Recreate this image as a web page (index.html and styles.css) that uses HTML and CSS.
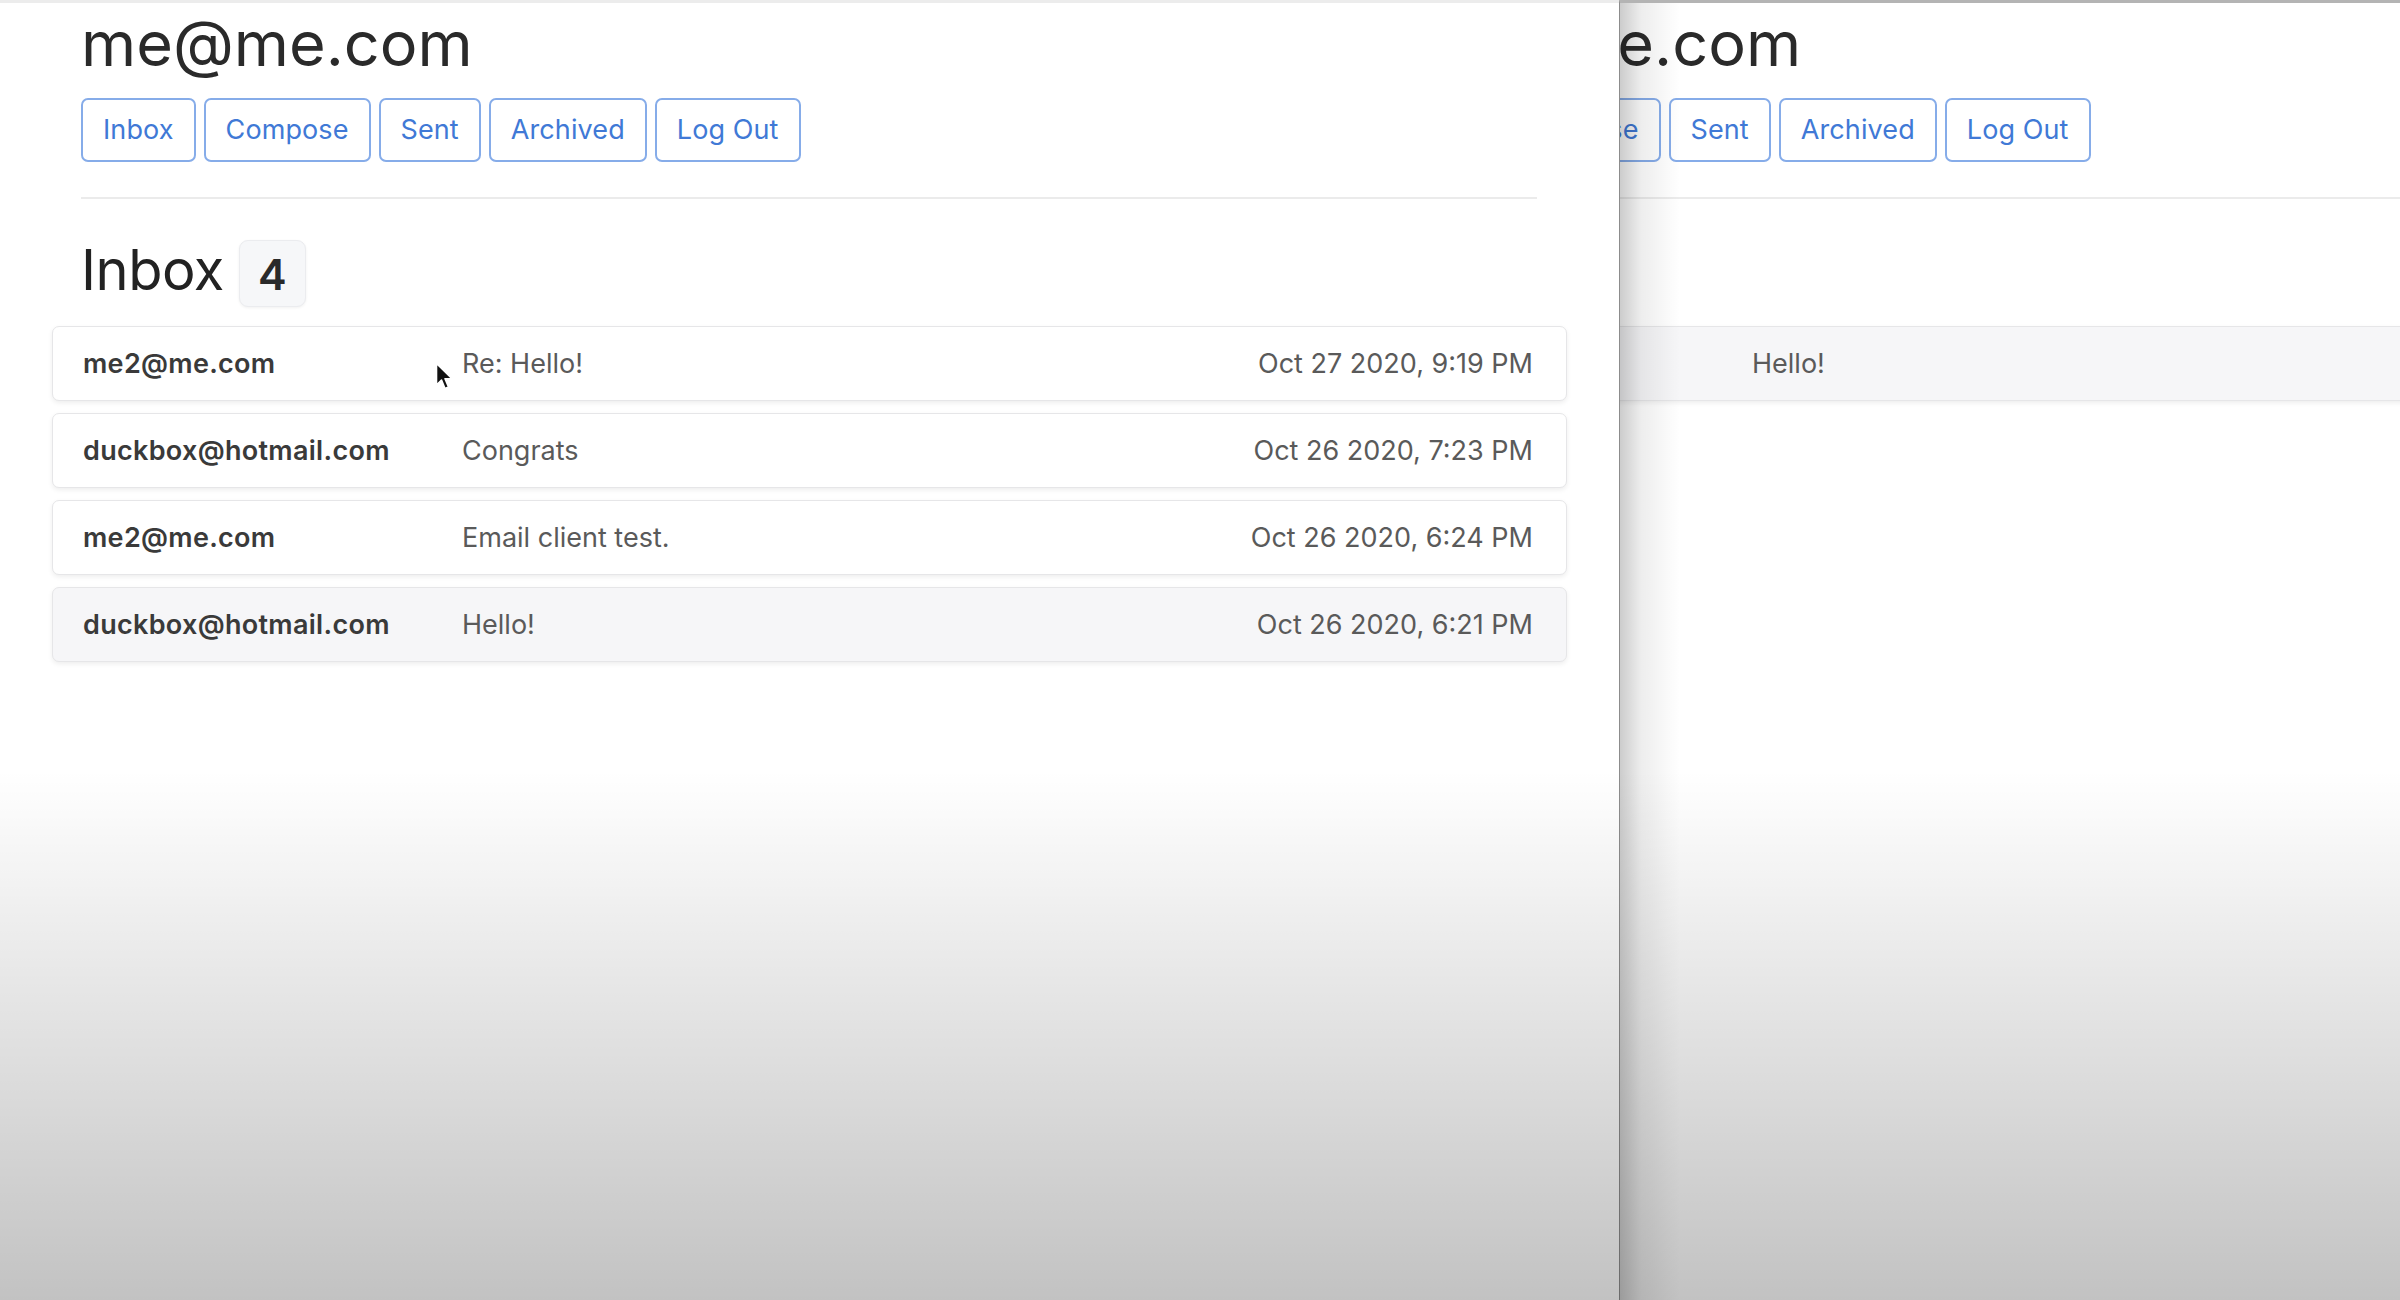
FILE: index.html
```html
<!DOCTYPE html>
<html lang="en">
<head>
<meta charset="utf-8">
<title>Mail</title>
<link rel="stylesheet" href="styles.css">
</head>
<body>
<div class="desktop">
  <div class="window window-left">
    <div class="page">
      <h2 class="user">me@me.com</h2>
      <nav class="nav">
        <button class="btn">Inbox</button>
        <button class="btn">Compose</button>
        <button class="btn">Sent</button>
        <button class="btn">Archived</button>
        <button class="btn">Log Out</button>
      </nav>
      <hr class="rule">
      <div class="mailbox-head">
        <h3 class="mailbox-title">Inbox</h3>
        <span class="badge">4</span>
      </div>
      <div class="emails">
        <div class="email">
          <span class="sender">me2@me.com</span>
          <span class="subject">Re: Hello!</span>
          <span class="date">Oct 27 2020, 9:19 PM</span>
        </div>
        <div class="email">
          <span class="sender">duckbox@hotmail.com</span>
          <span class="subject">Congrats</span>
          <span class="date">Oct 26 2020, 7:23 PM</span>
        </div>
        <div class="email">
          <span class="sender">me2@me.com</span>
          <span class="subject">Email client test.</span>
          <span class="date">Oct 26 2020, 6:24 PM</span>
        </div>
        <div class="email read">
          <span class="sender">duckbox@hotmail.com</span>
          <span class="subject">Hello!</span>
          <span class="date">Oct 26 2020, 6:21 PM</span>
        </div>
      </div>
    </div>
  </div>
  <div class="window window-right">
    <div class="page page-shifted">
      <h2 class="user">me2@me.com</h2>
      <nav class="nav">
        <button class="btn">Inbox</button>
        <button class="btn">Compose</button>
        <button class="btn">Sent</button>
        <button class="btn">Archived</button>
        <button class="btn">Log Out</button>
      </nav>
      <hr class="rule">
      <div class="mailbox-head">
        <h3 class="mailbox-title">Sent</h3>
      </div>
      <div class="emails">
        <div class="email read">
          <span class="sender">me@me.com</span>
          <span class="subject">Hello!</span>
          <span class="date">Oct 26 2020, 6:21 PM</span>
        </div>
      </div>
    </div>
  </div>
  <svg class="cursor" width="20" height="30" viewBox="0 0 20 30" aria-hidden="true">
    <path d="M1.5 1.5 L1.5 23 L6.5 18 L10 26.5 L13.5 25 L10 16.8 L17 16.8 Z" fill="#111" stroke="#fff" stroke-width="1.6" stroke-linejoin="round"/>
  </svg>
  <div class="vignette"></div>
</div>
</body>
</html>
```

FILE: styles.css
```css
* {
  box-sizing: border-box;
}

html, body {
  margin: 0;
  padding: 0;
  background: #ffffff;
}

body {
  width: 2400px;
  height: 1300px;
  overflow: hidden;
  font-family: "Inter", "Noto Sans", "Liberation Sans", sans-serif;
  color: #262a2e;
}

.desktop {
  position: relative;
  display: flex;
  width: 2400px;
  height: 1300px;
  overflow: hidden;
}

.window {
  height: 1300px;
  overflow: hidden;
  background: #ffffff;
}

.window-left {
  width: 1619px;
  flex: none;
  border-top: 3px solid #ececec;
}

.window-right {
  position: relative;
  flex: 1;
  border-top: 3px solid #b4b4b4;
  border-left: 1px solid #8c8c8c;
}

.window-right::before {
  content: "";
  position: absolute;
  left: 0;
  top: 0;
  bottom: 0;
  width: 60px;
  background: linear-gradient(to right, rgba(0,0,0,0.20), rgba(0,0,0,0.07) 35%, rgba(0,0,0,0));
  z-index: 2;
  pointer-events: none;
}

.page {
  width: 1619px;
  flex: none;
  padding: 4px 82px 0 81px;
}

.page-shifted {
  margin-left: -330px;
}

.user {
  margin: 0;
  font-size: 63px;
  line-height: 72px;
  font-weight: 400;
  color: #2a2a2a;
  letter-spacing: 0;
}

.nav {
  display: flex;
  gap: 8px;
  margin-top: 19px;
}

.btn {
  font-family: inherit;
  font-size: 27px;
  line-height: 42px;
  padding: 9px 20px;
  border: 2px solid #86ace9;
  border-radius: 7px;
  background: #ffffff;
  color: #4079d6;
  letter-spacing: 0.1px;
}

.rule {
  margin: 35px 0 0;
  border: 0;
  height: 2px;
  background: #ebebeb;
}

.mailbox-head {
  display: flex;
  align-items: flex-start;
  gap: 15px;
  margin-top: 41px;
  height: 67px;
}

.mailbox-title {
  margin: 0;
  font-size: 56px;
  line-height: 60px;
  font-weight: 400;
  color: #222;
  letter-spacing: -0.5px;
}

.badge {
  display: flex;
  align-items: center;
  justify-content: center;
  width: 67px;
  height: 67px;
  background: #f6f7f9;
  border: 1px solid #ebecef;
  border-radius: 9px;
  box-shadow: 0 1px 3px rgba(0,0,0,0.06);
  font-size: 43px;
  font-weight: 600;
  color: #2a2a2a;
}

.emails {
  display: flex;
  flex-direction: column;
  gap: 12px;
  margin: 19px -30px 0 -29px;
}

.email {
  display: flex;
  align-items: center;
  height: 75px;
  padding: 0 33px 0 30px;
  background: #ffffff;
  border: 1px solid #e6e6e8;
  border-radius: 7px;
  box-shadow: 0 2px 5px rgba(0,0,0,0.07);
  font-size: 27px;
}

.email.read {
  background: #f6f6f8;
}

.sender {
  width: 379px;
  flex: none;
  font-weight: 600;
  color: #3a3a3a;
  letter-spacing: 0.3px;
}

.subject {
  color: #5a5a5a;
}

.date {
  margin-left: auto;
  color: #5a5a5a;
}

.cursor {
  position: absolute;
  left: 435px;
  top: 362px;
  z-index: 3;
}

.vignette {
  position: absolute;
  left: 0;
  top: 0;
  width: 2400px;
  height: 1300px;
  pointer-events: none;
  z-index: 4;
  background: linear-gradient(to bottom, rgba(0,0,0,0) 0, rgba(0,0,0,0) 770px, rgba(0,0,0,0.06) 900px, rgba(0,0,0,0.13) 1060px, rgba(0,0,0,0.24) 1300px);
}
```
